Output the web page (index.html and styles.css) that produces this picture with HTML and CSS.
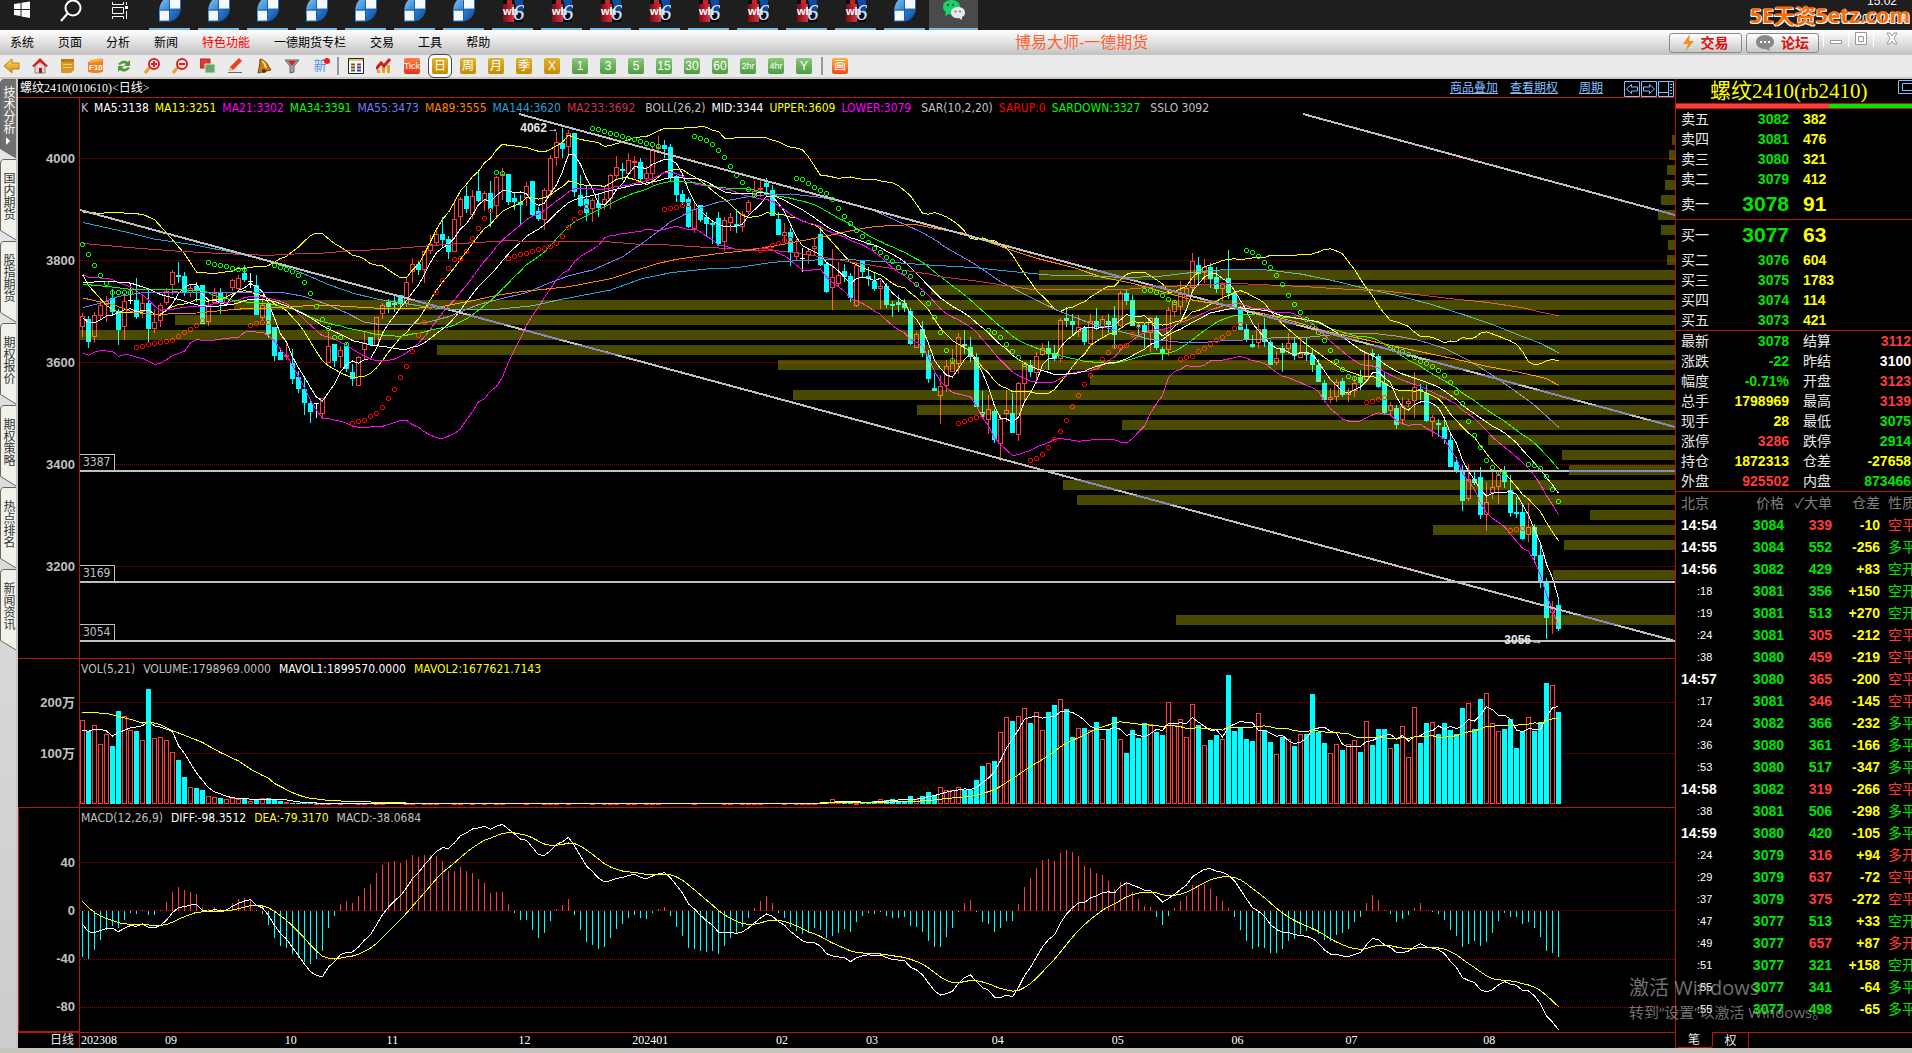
FILE: index.html
```html
<!DOCTYPE html>
<html lang="zh-CN">
<head>
<meta charset="utf-8">
<title>博易大师-一德期货</title>
<link rel="stylesheet" href="styles.css">
</head>
<body>
<svg class="defs" aria-hidden="true">
  <defs>
    <linearGradient id="blue" x1="0" y1="0" x2="1" y2="1"><stop offset="0" stop-color="#8cc4f0"/><stop offset=".5" stop-color="#2f86d2"/><stop offset="1" stop-color="#0a3f96"/></linearGradient>
    <linearGradient id="red" x1="0" y1="0" x2="1" y2="0"><stop offset="0" stop-color="#7c0a14"/><stop offset="1" stop-color="#d8343c"/></linearGradient>
    <linearGradient id="gold" x1="0" y1="0" x2="0" y2="1"><stop offset="0" stop-color="#ffe060"/><stop offset="1" stop-color="#d88a10"/></linearGradient>
    <symbol id="leaf" viewBox="0 0 22 21"><path d="M0 21V10Q1 0 8 -3H22V8Q21 19 11 21Z" fill="url(#blue)"/><path d="M11 -3H21V8H11ZM1 10H10V20H1Z" fill="#f4f8fc"/><path d="M0 9.500H22M10.500 0V21" stroke="#1a5cae" fill="none"/></symbol>
    <symbol id="wh" viewBox="0 0 20 22"><path d="M0 0H20V22H0Z" fill="#050508"/><path d="M11 0H20V16Q13 12 11 0Z" fill="#12489c"/><path d="M0 4H11V22H0Z" fill="url(#red)"/><path d="M4 0H9V4H4Z" fill="#c0242c"/><text x="0" y="15" font-size="11" font-weight="bold" fill="#fff">wh</text><text x="10" y="20" font-size="23" font-style="italic" font-family="Liberation Serif" fill="#cfe4ff">6</text></symbol>
    <symbol id="tab" viewBox="0 0 16 82" preserveAspectRatio="none"><path d="M17 .5H4Q.5 .5 .5 5V71.500L16 81"/></symbol>
  </defs>
</svg>

<header class="taskbar">
  <div class="sys">
    <button aria-label="开始"><svg width="16" height="17" viewBox="0 0 16 17"><path d="M0 3 6.500 2V8H0ZM7.500 1.800 16 .6V8H7.500ZM0 9H6.500V15L0 14ZM7.500 9H16V17L7.500 15.500Z" fill="#fff"/></svg></button>
    <button aria-label="搜索"><svg width="22" height="22" viewBox="0 0 22 22"><circle cx="13" cy="8" r="7.500" fill="none" stroke="#fff" stroke-width="2"/><path d="M8 13 1 21" stroke="#fff" stroke-width="2"/></svg></button>
    <button aria-label="任务视图"><svg width="16" height="18" viewBox="0 0 16 18"><path d="M.5 1V3.500H11.500V1M.5 6.500H11.500V12.500H.5ZM.5 18V15.500H11.500V18M14.500 1V4M14.500 10V18" fill="none" stroke="#fff"/><path d="M13 5H16V8H13Z" fill="#fff"/></svg></button>
  </div>
  <div class="apps">
    <button aria-label="博易大师"><svg><use href="#leaf"/></svg></button>
    <button aria-label="博易大师"><svg><use href="#leaf"/></svg></button>
    <button aria-label="博易大师"><svg><use href="#leaf"/></svg></button>
    <button aria-label="博易大师"><svg><use href="#leaf"/></svg></button>
    <button aria-label="博易大师"><svg><use href="#leaf"/></svg></button>
    <button aria-label="博易大师"><svg><use href="#leaf"/></svg></button>
    <button aria-label="博易大师"><svg><use href="#leaf"/></svg></button>
    <button aria-label="文华财经"><svg><use href="#wh"/></svg></button>
    <button aria-label="文华财经"><svg><use href="#wh"/></svg></button>
    <button aria-label="文华财经"><svg><use href="#wh"/></svg></button>
    <button aria-label="文华财经"><svg><use href="#wh"/></svg></button>
    <button aria-label="文华财经"><svg><use href="#wh"/></svg></button>
    <button aria-label="文华财经"><svg><use href="#wh"/></svg></button>
    <button aria-label="文华财经"><svg><use href="#wh"/></svg></button>
    <button aria-label="文华财经"><svg><use href="#wh"/></svg></button>
    <button aria-label="博易大师"><svg><use href="#leaf"/></svg></button>
    <button class="wechat" aria-label="微信"><svg viewBox="0 0 22 22"><path d="M8 0C3 0 0 3 0 7c0 2 1 4 3 5l-1 4 4-2c6 1 11-2 11-7S13 0 8 0Z" fill="#18d26c"/><circle cx="5" cy="5" r="1.200" fill="#0a5c30"/><circle cx="10" cy="5" r="1.200" fill="#0a5c30"/><path d="M15 7c-4 0-7 2-7 6 0 3 3 6 8 5l3 2v-3c2-1 3-2 3-4 0-4-3-6-7-6Z" fill="#e8e8e8"/><circle cx="12.500" cy="11.500" r="1" fill="#777"/><circle cx="17" cy="11.500" r="1" fill="#777"/></svg></button>
  </div>
  <div class="clock"><span>15:02</span><span>2024/8/16</span></div>
  <strong class="brand">5E天资5etz.com</strong>
</header>

<div class="menubar">
  <nav>
    <button>系统</button><button>页面</button><button>分析</button><button>新闻</button><button class="hot">特色功能</button><button>一德期货专栏</button><button>交易</button><button>工具</button><button>帮助</button>
  </nav>
  <h1>博易大师-一德期货</h1>
  <button class="action"><svg width="11" height="18" viewBox="0 0 11 18"><path d="M7 0 0 10H5L2 18 11 7H6Z" fill="#f09020"/></svg>交易</button>
  <button class="action"><svg width="18" height="16" viewBox="0 0 18 16"><path d="M9 0C4 0 0 3 0 7s4 7 8 7h1l5 2-1-3c3-1 5-3 5-6 0-4-4-7-9-7Z" fill="#888"/><path d="M4 6H6V8H4ZM8 6H10V8H8ZM12 6H14V8H12Z" fill="#fff"/></svg>论坛</button>
  <div class="winctl">
    <button aria-label="最小化"><svg width="12" height="13" viewBox="0 0 12 13"><path d="M.5 8.500H11.500V11.500H.5Z" fill="#fff" stroke="#999"/></svg></button>
    <button aria-label="还原"><svg width="12" height="13" viewBox="0 0 12 13"><path d="M.5 .5H11.500V12.500H.5ZM3.500 4.500H8.500V9.500H3.500Z" fill="#fff" stroke="#999"/></svg></button>
    <button aria-label="关闭"><svg width="12" height="13" viewBox="0 0 12 13"><path d="M1 1H4L6 4 8 1H11L8 6.500 11 12H8L6 9 4 12H1L4 6.500Z" fill="#fff" stroke="#999"/></svg></button>
  </div>
</div>

<div class="toolbar">
  <button aria-label="后退"><svg><path d="M0 8 8 1V5H15V11H8V15Z" fill="url(#gold)" stroke="#c08010"/></svg></button>
  <button aria-label="主页"><svg><path d="M3 8V15H13V8L8 3Z" fill="#e0d8d8" stroke="#888"/><path d="M0 8 8 0 16 8 14 9 8 4 2 9Z" fill="#d42020"/><path d="M7 10H10V15H7Z" fill="#a01818"/></svg></button>
  <button aria-label="便笺"><svg><path d="M1 1H14V12L11 15H1Z" fill="#d89828"/><path d="M1 1H14V4H1Z" fill="#c07a10"/><path d="M3 6.500H12M3 9.500H12" stroke="#f0c878"/></svg></button>
  <button aria-label="F10"><svg><path d="M0 4 15 1V14Q8 16 0 14Z" fill="#f08020"/><path d="M2 2 14 0V3L2 5Z" fill="#f8b040"/><text x="1" y="12" font-size="8" font-weight="bold" fill="#fff">F10</text></svg></button>
  <button aria-label="刷新"><svg><path d="M2 6Q7 0 12 4L14 2V8H8L10 6Q7 4 4 7ZM14 10Q9 16 4 12L2 14V8H8L6 10Q9 12 12 9Z" fill="#4c9c30"/></svg></button>
  <button aria-label="放大"><svg><path d="M6 9 1 15" stroke="#f0a030" stroke-width="3"/><circle cx="10" cy="6" r="5" fill="#fff0f0" stroke="#e02020" stroke-width="2"/><path d="M7 6H13M10 3V9" stroke="#e02020" stroke-width="2"/></svg></button>
  <button aria-label="缩小"><svg><path d="M6 9 1 15" stroke="#f0a030" stroke-width="3"/><circle cx="10" cy="6" r="5" fill="#fff0f0" stroke="#e02020" stroke-width="2"/><path d="M7 6H13" stroke="#e02020" stroke-width="2"/></svg></button>
  <button aria-label="叠加"><svg><path d="M0 1H10V10H0Z" fill="#e03838" stroke="#b02020"/><path d="M5 6H15V15H5Z" fill="#68a868" stroke="#d8e8d8"/></svg></button>
  <button aria-label="画线"><svg><path d="M2 9 11 0 14 3 5 12 1 13Z" fill="#e84020"/><path d="M2 9 5 12 1 13Z" fill="#f0c890"/><path d="M0 14.500H14" stroke="#666"/></svg></button>
  <button aria-label="预警"><svg><path d="M4 1Q10 2 13 9L15 12 2 15 3 10Q4 6 4 1Z" fill="#c87818" stroke="#804808"/><path d="M6 3Q9 5 10 10" stroke="#f8d070" fill="none" stroke-width="2"/><circle cx="8" cy="13" r="2" fill="#503008"/></svg></button>
  <button aria-label="筛选"><svg><path d="M1 2H15L10 8V14L6 15V8Z" fill="#a0a4a8" stroke="#606468"/><path d="M4 3H12L8 8Z" fill="#e02028"/></svg></button>
  <button class="new">新</button>
  <i class="sep"></i>
  <button aria-label="报价"><svg><path d="M.5 .5H15.500V15.500H.5Z" fill="#fff" stroke="#222"/><path d="M1 1H15V3H1Z" fill="#e8c860"/><path d="M3 6.500H7M3 12.500H7" stroke="#208030" stroke-width="2"/><path d="M9 6.500H13M3 9.500H7" stroke="#d02020" stroke-width="2"/><path d="M9 9.500H13M9 12.500H13" stroke="#2040c0" stroke-width="2"/></svg></button>
  <button aria-label="走势"><svg><path d="M1 12H4V15H1ZM6 9H9V15H6ZM11 7H14V15H11Z" fill="#e8a020"/><path d="M0 11 5 5 8 8 14 1" stroke="#e01818" stroke-width="3" fill="none"/></svg></button>
  <button class="p tick">Tick</button>
  <button class="p gold on">日</button>
  <button class="p gold">周</button>
  <button class="p gold">月</button>
  <button class="p gold">季</button>
  <button class="p gold">X</button>
  <button class="p green">1</button>
  <button class="p green">3</button>
  <button class="p green">5</button>
  <button class="p green">15</button>
  <button class="p green">30</button>
  <button class="p green">60</button>
  <button class="p green small">2hr</button>
  <button class="p green small">4hr</button>
  <button class="p green">Y</button>
  <i class="sep"></i>
  <button class="p draw">画</button>
</div>

<main>
  <aside>
    <button class="on"><svg><use href="#tab"/></svg><span>技术分析</span><i></i></button>
    <button><svg><use href="#tab"/></svg><span>国内期货</span></button>
    <button><svg><use href="#tab"/></svg><span>股指期货</span></button>
    <button><svg><use href="#tab"/></svg><span>期权报价</span></button>
    <button><svg><use href="#tab"/></svg><span>期权策略</span></button>
    <button><svg><use href="#tab"/></svg><span>热点排名</span></button>
    <button><svg><use href="#tab"/></svg><span>新闻资讯</span></button>
  </aside>

  <section class="charts">
    <div class="charthead">
      <h2>螺纹2410(010610)&lt;日线&gt;</h2>
      <a href="#">商品叠加</a><a href="#">查看期权</a><a href="#" class="cycle">周期</a>
      <div class="nav">
        <button aria-label="前一个"><svg viewBox="0 0 16 17"><path d="M.5 1.500H15.500V16.500H.5ZM2.500 9 7.500 4.500V7H13.500V11H7.500V13.500Z"/></svg></button><button aria-label="后一个"><svg viewBox="0 0 16 17"><path d="M.5 1.500H15.500V16.500H.5ZM13.500 9 8.500 4.500V7H2.500V11H8.500V13.500Z"/></svg></button><button aria-label="布局"><svg viewBox="0 0 16 17"><path d="M.5 1.500H15.500V16.500H.5ZM10.500 2V16M1 12.500H10M12 4.500H14M12 7.500H14M12 10.500H14M12 13.500H14"/></svg></button>
      </div>
    </div>

    <div class="pane price">
      <div class="gutter"><span>4000</span><span>3800</span><span>3600</span><span>3400</span><span>3200</span></div>
      <div class="plot">
        <svg id="price" viewBox="0 0 1595 560" preserveAspectRatio="none"></svg>
        <p class="legend">
          <span class="k">K</span><span class="w">MA5:3138</span><span class="y">MA13:3251</span><span class="m">MA21:3302</span><span class="g">MA34:3391</span><span class="v">MA55:3473</span><span class="o">MA89:3555</span><span class="b">MA144:3620</span><span class="c last">MA233:3692</span>
          <span class="k">BOLL(26,2)</span><span class="w">MID:3344</span><span class="y">UPPER:3609</span><span class="m last">LOWER:3079</span>
          <span class="k">SAR(10,2,20)</span><span class="r">SARUP:0</span><span class="g last">SARDOWN:3327</span>
          <span class="k">SSLO 3092</span>
        </p>
        <span class="level l1">3387</span><span class="level l2">3169</span><span class="level l3">3054</span>
        <span class="mark high">4062→</span><span class="mark low">3056→</span>
      </div>
    </div>

    <div class="pane volume">
      <div class="gutter"><span>200万</span><span>100万</span></div>
      <div class="plot">
        <svg id="volume" viewBox="0 0 1595 148" preserveAspectRatio="none"></svg>
        <p class="legend"><span class="k">VOL(5,21)</span><span class="k">VOLUME:1798969.0000</span><span class="w">MAVOL1:1899570.0000</span><span class="y">MAVOL2:1677621.7143</span></p>
      </div>
    </div>

    <div class="pane macd">
      <div class="gutter"><span>40</span><span>0</span><span>-40</span><span>-80</span></div>
      <div class="plot">
        <svg id="macd" viewBox="0 0 1595 224" preserveAspectRatio="none"></svg>
        <p class="legend"><span class="k">MACD(12,26,9)</span><span class="w">DIFF:-98.3512</span><span class="y">DEA:-79.3170</span><span class="k">MACD:-38.0684</span></p>
      </div>
    </div>

    <div class="pane axis">
      <div class="gutter">日线</div>
      <div class="months" id="months"></div>
    </div>
  </section>

  <section class="quote">
    <h2>螺纹2410(rb2410)<svg viewBox="0 0 16 17"><path d="M.5 1.500H17V14.500H.5ZM4.500 4.500H17V11.500H4.500Z"/></svg></h2>
    <div class="ratio"><i></i></div>
    <table class="depth">
      <tbody>
        <tr><th>卖五</th><td>3082</td><td>382</td></tr>
        <tr><th>卖四</th><td>3081</td><td>476</td></tr>
        <tr><th>卖三</th><td>3080</td><td>321</td></tr>
        <tr><th>卖二</th><td>3079</td><td>412</td></tr>
        <tr class="best"><th>卖一</th><td>3078</td><td>91</td></tr>
      </tbody>
    </table>
    <table class="depth">
      <tbody>
        <tr class="best"><th>买一</th><td>3077</td><td>63</td></tr>
        <tr><th>买二</th><td>3076</td><td>604</td></tr>
        <tr><th>买三</th><td>3075</td><td>1783</td></tr>
        <tr><th>买四</th><td>3074</td><td>114</td></tr>
        <tr><th>买五</th><td>3073</td><td>421</td></tr>
      </tbody>
    </table>
    <table class="stats">
      <tbody>
        <tr><th>最新</th><td class="g">3078</td><th>结算</th><td class="r">3112</td></tr>
        <tr><th>涨跌</th><td class="g">-22</td><th>昨结</th><td class="w">3100</td></tr>
        <tr><th>幅度</th><td class="g">-0.71%</td><th>开盘</th><td class="r">3123</td></tr>
        <tr><th>总手</th><td class="y">1798969</td><th>最高</th><td class="r">3139</td></tr>
        <tr><th>现手</th><td class="y">28</td><th>最低</th><td class="g">3075</td></tr>
        <tr><th>涨停</th><td class="r">3286</td><th>跌停</th><td class="g">2914</td></tr>
        <tr><th>持仓</th><td class="y">1872313</td><th>仓差</th><td class="y">-27658</td></tr>
        <tr><th>外盘</th><td class="r">925502</td><th>内盘</th><td class="g">873466</td></tr>
      </tbody>
    </table>
    <table class="ticks">
      <thead><tr><th>北京</th><th>价格</th><th>✓大单</th><th>仓差</th><th>性质</th></tr></thead>
      <tbody id="ticks"></tbody>
    </table>
    <div class="tabs"><button class="on">笔</button><button>权</button></div>
  </section>
</main>
<div class="watermark"><strong>激活 Windows</strong><span>转到“设置”以激活 Windows。</span></div>
<script src="chart.js"></script>
</body>
</html>
```
FILE: styles.css
```css
* { box-sizing: border-box; }
body {
  margin: 0;
  background: #c8c4c0;
  color: #e8e8e8;
  font: 12px/16px "Liberation Sans", "Noto Sans CJK SC", sans-serif;
  overflow: hidden;
}
button { border: 0; padding: 0; margin: 0; background: none; color: inherit; font: inherit; display: flex; align-items: center; justify-content: center; white-space: nowrap; }
h1, h2, p { margin: 0; font-weight: normal; }
table { border-collapse: collapse; table-layout: fixed; width: 100%; }
th, td { padding: 0; white-space: nowrap; }
.defs { position: absolute; width: 0; height: 0; }

.w { color: #fff; } .y { color: #ff0; } .m { color: #f0f; } .v { color: #7878f0; }
.o { color: #ff8000; } .b { color: #28a0d8; } .c { color: #d03050; } .k { color: #c0c0c0; }
.g { color: #00e600; } .r { color: #ff3c3c; }

/* taskbar */
.taskbar { position: relative; display: flex; height: 30px; background: #1e1e1e; overflow: hidden; }
.sys { display: flex; align-items: flex-start; width: 145px; padding-left: 14px; gap: 30px; }
.sys button { height: 22px; align-items: flex-start; }
.sys button:nth-child(1), .sys button:nth-child(3) { padding-top: 1px; }
.apps { display: flex; }
.apps button { width: 49px; height: 30px; padding-bottom: 6px; align-items: flex-start; background: linear-gradient(#76b9ed, #76b9ed) 4px 28px / 41px 2px no-repeat; }
.apps svg { width: 22px; height: 22px; }
.apps .wechat { background: linear-gradient(#76b9ed, #76b9ed) 0 28px / 49px 2px no-repeat, #4a4a4a; }
.clock { margin-left: auto; display: flex; flex-direction: column; align-items: center; font-size: 12px; line-height: 16px; color: #fff; margin-top: -7px; width: 60px; white-space: nowrap; }
.clock span:last-child { margin-top: 2px; }
.brand { position: absolute; right: 2px; top: 3px; font: bold 21px/24px "Open Sans", "Noto Sans CJK SC", sans-serif; color: #ff6a00; text-shadow: 1px 1px #fff, -1px 1px #fff; }

/* menu */
.menubar { display: flex; align-items: center; height: 25px; background: linear-gradient(#ffffff, #e4e4e4 45%, #c2c2c2); color: #000; }
.menubar nav { display: flex; gap: 24px; padding-left: 10px; }
.hot { color: #f00; }
.menubar h1 { flex: 1; text-align: center; padding-left: 4px; font-size: 16px; line-height: 24px; color: #ff6030; }
.action { width: 73px; height: 20px; margin-right: 4px; gap: 7px; border: 1px solid #888; border-radius: 3px; background: linear-gradient(#fff, #c8c8c8); color: #d81414; font-size: 14px; font-weight: bold; }
.winctl { display: flex; width: 89px; align-self: stretch; }
.winctl button { width: 25px; height: 17px; border-left: 1px solid #fff; }
.winctl button:last-child { width: 37px; }

/* toolbar */
.toolbar { display: flex; align-items: center; gap: 12px; height: 24px; padding: 0 4px; background: #ebebeb; border-bottom: 2px solid #cbc7c3; }
.toolbar button { width: 16px; height: 16px; flex: none; }
.toolbar svg { width: 16px; height: 16px; }
.toolbar .new { position: relative; color: #4a90e8; font-size: 13px; }
.new::after { content: ""; position: absolute; right: -2px; top: 0; width: 6px; height: 6px; border-radius: 3px; background: #f01818; }
.sep { width: 2px; height: 18px; margin: 0 -3px; background: #999; }
.toolbar .p { border-radius: 2px; color: #fff; font-size: 12px; line-height: 16px; }
.toolbar .small { font-size: 9px; }
.toolbar .tick { background: linear-gradient(#ff8040, #e83018); font-size: 9px; }
.gold { background: linear-gradient(#e0b030, #c48c00); }
.green { background: linear-gradient(#8cc878, #4c9c40); }
.draw { background: linear-gradient(#ffb040, #f04818); }
.toolbar .on { outline: 1px solid #444; outline-offset: 3px; box-shadow: 0 0 0 3px #fff; }

/* side tabs */
main { display: flex; background: #000; }
aside { width: 18px; flex: none; background: linear-gradient(#e8e8e8, #cccccc); border-right: 2px solid #c8c4c4; }
aside button { position: relative; width: 16px; height: 82px; flex-direction: column; justify-content: flex-start; padding-top: 13px; color: #333; }
aside button.on { height: 80px; padding-top: 7px; color: #fff; }
aside svg { position: absolute; inset: 0; width: 16px; height: 100%; fill: #f2f2ea; stroke: #666; }
aside .on svg { fill: #707070; }
aside span { position: relative; writing-mode: vertical-rl; font-size: 12px; line-height: 16px; }
aside i { position: relative; margin-top: 3px; border: 4px solid transparent; border-left-color: #fff; border-right: 0; }

/* charts */
.charts { flex: 1; min-width: 0; border-right: 1px solid #b81408; }
.charthead { display: flex; align-items: center; height: 18px; padding-left: 2px; font-size: 12px; }
.charthead h2 { flex: 1; font: 12px/18px "Liberation Serif", "Noto Sans CJK SC", serif; color: #fff; }
.charthead a { color: #80c0ff; margin-right: 12px; line-height: 15px; }
.charthead .cycle { margin: 0 21px 0 9px; }
.nav { display: flex; gap: 1px; padding-right: 1px; }
.nav svg { width: 16px; height: 17px; fill: none; stroke: #80c0ff; }
.pane { display: flex; border-top: 1px solid #b81408; }
.gutter { flex: none; width: 62px; border-right: 1px solid #b81408; padding-right: 4px; text-align: right; color: #c0c0c0; font-size: 13px; font-weight: bold; }
.gutter span { display: block; }
.price .gutter { padding-top: 10px; line-height: 102px; height: 560px; }
.volume .gutter { padding-top: 18px; line-height: 51px; height: 148px; }
.macd .gutter { padding-top: 31px; line-height: 48px; border: 1px solid #b81408; border-width: 0 1px 1px; height: 224px; }
.plot { position: relative; flex: 1; min-width: 0; }
.plot svg { display: block; width: 100%; }
.price svg { height: 560px; }
.volume svg { height: 148px; }
.macd svg { height: 224px; }
.legend { position: absolute; left: 1px; top: 2px; display: flex; gap: 8px; font: 12px/16px "DejaVu Sans Condensed", sans-serif; white-space: nowrap; }
.price .legend { gap: 6px; }
.legend .last { margin-right: 4px; }
.legend .g { color: #0f0; }
.legend .r { color: #f00; }
.level { position: absolute; left: 0; width: 35px; height: 17px; border: 1px solid #c0c0c0; border-left: 0; padding-left: 3px; background: #000; color: #c0c0c0; font: 12px/15px "DejaVu Sans Condensed", sans-serif; }
.l1 { top: 356px; } .l2 { top: 467px; } .l3 { top: 526px; }
.mark { position: absolute; font-weight: bold; color: #e8e8e8; }
.high { left: 27.600%; top: 22px; }
.low { left: 89.300%; top: 534px; }
.axis { height: 16px; }
.axis .gutter { line-height: 15px; font-size: 12px; font-weight: normal; color: #e8e8e8; padding-right: 5px; }
.months { display: flex; flex: 1; font: 12px/15px "Liberation Serif", serif; color: #fff; padding-left: 1px; }

/* quotes */
.quote { width: 236px; flex: none; overflow: hidden; display: flex; flex-direction: column; font-size: 14px; }
.quote h2 { position: relative; height: 24px; padding-left: 34px; font: 21px/24px "Liberation Serif", "Noto Sans CJK SC", serif; color: #ff0; }
.quote h2 svg { position: absolute; right: -2px; top: 0; width: 16px; height: 17px; fill: none; stroke: #80c0ff; stroke-width: 1; }
.ratio { height: 6px; background: #00e600; border: 1px solid #b81408; border-width: 1px 0; }
.ratio i { display: block; width: 65%; height: 4px; background: #ff3c3c; }
.quote th { font-weight: normal; text-align: left; color: #e8e8e8; }
.quote td { font-weight: bold; text-align: right; }
.depth, .stats { border-bottom: 1px solid #b81408; line-height: 20px; }
.depth tr, .stats tr { height: 20px; }
.depth th, .stats th:first-child { width: 42px; padding-left: 5px; }
.depth td:nth-child(2) { width: 71px; color: #00e600; }
.depth td:nth-child(3) { padding-left: 14px; text-align: left; color: #ff0; }
.depth .best { height: 30px; }
.depth .best td { font-size: 21px; }
.stats td:nth-child(2) { width: 71px; }
.stats th:nth-child(3) { width: 55px; padding-left: 14px; }
.stats td:nth-child(4) { padding-right: 1px; }
.ticks tr { height: 22px; }
.ticks thead th { color: #808080; text-align: right; }
.ticks thead th:first-child { width: 42px; padding-left: 5px; text-align: left; }
.ticks thead th:nth-child(2) { width: 66px; }
.ticks thead th:nth-child(3), .ticks thead th:nth-child(4) { width: 48px; }
.ticks th:last-child, .ticks td:last-child { text-align: left; padding-left: 8px; font-weight: normal; }
.ticks td:first-child { text-align: left; padding-left: 5px; color: #fff; }
.ticks td.sec { padding-left: 21px; font-size: 11px; font-weight: normal; }
.tabs { display: flex; height: 16px; margin-top: auto; border-top: 1px solid #b81408; font-size: 12px; }
.tabs button { width: 36px; height: 15px; border-right: 1px solid #b81408; }
.tabs .on { width: 37px; margin-top: -1px; background: #000; border-bottom: 1px solid #b81408; border-radius: 0 0 3px 3px; height: 16px; }

.watermark { position: absolute; right: 88px; top: 975px; width: 195px; color: rgba(190, 190, 190, .6); font-family: "Open Sans", "Noto Sans CJK SC", sans-serif; white-space: nowrap; pointer-events: none; }
.watermark strong { display: block; font-weight: normal; font-size: 20px; line-height: 26px; }
.watermark span { display: block; font-size: 15px; line-height: 22px; }
```
FILE: chart.js
```js
// Daily bars: colour (r up, c down, w flat) then high, open/close top, open/close bottom, low.
// The history comes in three blocks, each with its own pixel scale.
const blocks = [
  { y: v => v / 2.7034 - 18, x: v => v / 3 - 80, bars: `r630,638,669,695 c639,647,707,725 r627,634,696,711 r601,609,639,645 r585,597,609,654 c566,589,627,637 c620,625,676,716 r575,597,667,703 w548,596,597,606 c534,596,642,645 r580,604,626,643 c565,604,672,710 r620,655,672,684 r604,609,651,668 r562,570,604,608 r514,520,553,580 c492,528,532,549 c520,530,576,584 r554,561,577,587 c546,558,569,600 c554,554,659,660 r594,609,653,665 r562,575,603,606 c562,574,604,632 r575,590,604,606 r537,542,561,570 r527,534,565,576 c500,521,541,545 w522,543,545,562 c528,554,635,635 r590,608,644,650 c603,603,686,697 c668,668,745,760 c726,735,756,757 r706,744,748,757 c728,765,807,822 c788,804,834,846 c800,834,872,906 c866,872,897,927 w874,874,876,915 r860,860,902,916 r681,719,764,766 c714,714,761,775 r719,731,748,778 c710,719,781,790 c768,789,808,827 r745,750,826,827 r680,711,729,757 c695,695,717,718 r640,642,718,720 r603,609,633,647 c593,599,614,631 c585,604,609,627 c580,581,605,620 r534,547,606,615 r481,497,518,549 c489,497,514,527 r461,461,513,549 r420,444,461,470 r405,417,440,450 c370,416,432,453 c422,431,464,483 r325,377,464,465 r317,323,371,395 c287,314,348,360 r297,314,364,376 c249,300,327,330` },
  { y: v => v / 3 - 18, x: v => v / 3 + 400, bars: `r334,338,363,392 c302,339,388,440 r287,292,377,418 r265,283,288,360 c282,282,366,376 c340,354,367,390 c345,366,374,432 r305,319,354,378 c303,303,405,412 c380,393,416,422 r325,331,421,449 r225,235,334,350 r155,187,235,258 c145,190,207,233 r150,160,200,232 c160,160,335,350 c285,345,378,382 c318,357,399,424 r355,361,388,426 c340,370,384,411 r318,358,376,390 r282,286,358,386 r229,262,287,299 c249,267,271,299 r220,241,281,285 r228,243,250,293 c235,246,297,308 r258,280,297,310 r198,208,281,315 r168,200,204,213 c180,196,207,235 c193,202,293,305 c285,289,345,365 c330,342,366,374 c352,357,441,444 r370,386,451,458 c374,374,420,426 c395,411,431,472 c420,430,434,491 c396,414,491,495 r410,419,485,513 r400,412,430,453 c386,432,436,459 r392,402,440,456 r360,367,397,402 r304,332,345,350 r300,325,331,352 c294,310,321,350 c315,331,407,408 c397,418,464,465 r430,457,467,485 c445,457,515,558 r478,517,532,540 w503,533,535,576 r508,514,526,552 r474,497,507,525 c438,462,554,558 c550,552,635,638 r507,590,625,690 r547,586,611,622 c552,573,590,605 c580,588,653,667 r545,556,679,681 c543,543,577,592 c562,588,596,617 c575,603,626,633 r600,619,628,687 c608,619,675,684 c664,671,677,711 c645,667,674,696 c657,670,683,695 c685,693,791,795 r755,763,803,804 c723,747,818,831 c810,826,896,908 c880,924,933,934 r885,919,947,1031 r840,858,919,936 r808,850,875,876 r760,772,853,882` },
  { y: v => v / 3 + 122, x: v => v / 2.119 + 860, bars: `c330,372,377,401 c351,381,410,427 c398,412,560,562 c514,576,590,597 r524,568,600,641 c568,574,660,668 r585,597,673,722 r510,570,583,606 c520,580,639,640 r486,490,644,664 r427,433,492,549 c419,436,455,470 r395,409,458,491 r370,384,406,408 c362,384,402,449 c374,400,416,424 r295,300,418,426 c262,294,303,320 c283,304,314,348 r284,322,335,350 c318,323,365,375 r283,304,373,375 c264,303,320,329 r288,297,320,352 c283,304,315,340 c258,293,344,385 r214,219,319,321 c211,219,242,255 c224,240,317,319 c309,314,321,351 c309,316,337,385 r290,294,340,397 c289,294,383,390 c382,387,401,419 r262,271,391,408 r243,247,275,290 r183,223,261,285 r195,205,230,245 r99,122,205,215 c110,136,162,188 r118,140,158,190 c130,141,178,205 c140,171,206,218 r187,193,206,243 c90,174,218,236 c212,220,262,270 c258,262,330,331 c313,328,359,365 c345,373,380,384 r310,327,370,385 c294,328,365,380 c360,366,434,435 r394,414,430,434 c368,384,398,456 r340,368,388,402 c350,369,409,420 r353,399,414,415 c352,400,405,424 c384,404,434,455 c416,436,486,487 c480,489,539,543 r505,532,541,549 r476,486,532,545 c474,483,526,530 r505,516,526,546 r470,488,514,531 c450,472,488,510 r399,400,481,487 c388,400,402,421 c402,408,500,505 c460,490,578,585 r547,556,574,588 c555,564,614,627 r530,559,601,613 r538,543,551,560 r457,502,543,594 c492,507,514,540 c496,520,602,607 r585,592,607,650 c596,608,613,651 c598,621,656,671 c644,660,740,741 c712,725,750,760 c735,750,842,873 r732,776,838,842 c757,777,790,796 c742,771,885,896 r786,846,884,933 r757,802,818,836 r755,766,802,852 c738,752,785,804 c765,810,879,892 c831,877,881,895 c850,876,956,960 r850,922,946,965 c912,921,1007,1030 c968,1006,1083,1104 c1075,1085,1194,1258 r1143,1163,1180,1243 c1130,1155,1227,1233` }
];
const X = i => 2.5 + 6 * i;
const bars = blocks.flatMap(b => b.bars.split(' ').map(s => {
  const [high, top, bottom, low] = s.slice(1).split(',').map(v => Math.round(b.y(+v)));
  return { kind: s[0], high, top, bottom, low };
}));
const price = y => 4000 - (y - 60.6) / 0.51;
const toY = p => 60.6 + (4000 - p) * 0.51;
const closes = bars.map(b => price(b.kind === 'c' ? b.bottom : b.top));

const rect = (x, y, w, h, attrs) => `<rect x="${x}" y="${y}" width="${w}" height="${h}" ${attrs}/>`;
const seg = (x1, y1, x2, y2, colour, extra = '') => `<path d="M${x1} ${y1}L${x2} ${y2}" stroke="${colour}" fill="none" ${extra}/>`;
const poly = (pts, colour) => `<polyline points="${pts.map(p => p.map(v => v.toFixed(1)).join()).join(' ')}" fill="none" stroke="${colour}" shape-rendering="crispEdges"/>`;
const grid = ys => ys.map(y => seg(0, y + .5, 1595, y + .5, '#a00000', 'stroke-dasharray="1 1"')).join('');
const pairs = s => s.trim().split(' ').map(p => p.split(',').map(Number));
const place = (b, s) => s ? pairs(s).map(([x, y]) => [blocks[b].x(x), blocks[b].y(y)]) : [];
const mean = a => a.reduce((s, v) => s + v, 0) / a.length;
const rolling = (src, n, f) => src.map((_, i) => i < n - 1 ? null : f(src.slice(i - n + 1, i + 1)));
const computed = (n, f) => rolling(closes, n, f).map((p, i) => p === null ? null : [X(i), toY(p)]).filter(Boolean);
const sd = a => { const m = mean(a); return Math.sqrt(mean(a.map(v => (v - m) ** 2))); };

function candle(b, i) {
  const x = 6 * i, c = X(i);
  if (b.kind === 'c') return seg(c, b.high, c, b.low, '#0ff') + rect(x, b.top, 5, Math.max(2, b.bottom - b.top), 'fill="#0ff"');
  if (b.kind === 'w') return seg(c, b.high, c, b.low, '#fff') + seg(x, b.top + .5, x + 5, b.top + .5, '#fff');
  return seg(c, b.high, c, b.top, '#ff3c3c') + seg(c, b.bottom, c, b.low, '#ff3c3c') +
    rect(x + .5, b.top + .5, 4, Math.max(1, b.bottom - b.top - 1), 'fill="#000" stroke="#ff3c3c"');
}

const averages = [
  ['#fff', place(0, '248,643 266,656 284,656 302,648'), computed(5, mean)],
  ['#ff0', place(0, '248,527 266,556 284,574 302,592 320,610 338,620 356,628 428,630'), computed(13, mean)],
  ['#f0f', place(0, '248,525 266,534 320,536 338,540 356,548 392,560 428,581 446,595 464,612 482,622 518,620 554,614'), computed(21, mean)],
  ['#0f0', place(0, '248,552 320,558 392,566 464,566 518,565 572,570 608,568 644,583 698,595 752,602 806,604'), computed(34, mean)],
  ['#fff', place(0, '248,548 320,544 392,549 446,565 482,580 536,593 590,608 640,613'), computed(26, mean)],
  ['#ff0', place(0, '248,358 300,360 346,358 428,363 464,378 500,414 554,470 590,520 644,523'), computed(26, a => mean(a) + 2 * sd(a))],
  ['#f0f', place(0, '248,739 266,744 284,736 302,731 338,734 356,747 374,742 392,744 410,750 428,753 464,769 482,766 518,745 554,733 572,710 590,702 626,705'), computed(26, a => mean(a) - 2 * sd(a))]
];
const slow = [
  ['#7878f0', '248,615 302,603 356,585 428,575 518,573 842,574 914,585 986,608 1040,630 1094,655 1148,662 1220,662 1280,655 1346,640 1436,607', '68,655 140,638 200,612 266,587 338,570 428,530 500,480 572,425 640,390 716,366 806,350 860,344 932,342 1022,352 1112,370 1166,385 1238,417 1328,458 1382,490', '0,72 77,135 128,185 192,232 250,272 319,310 383,335 446,358 510,367 560,367 611,361 675,359 713,352 770,353 827,345 878,340 916,340 967,348 1018,362 1069,385 1120,421 1170,465 1221,515 1260,556 1311,622'],
  ['#ff8000', '248,589 300,600 338,607 400,628 460,634 520,632 590,630 680,622 752,617 842,616 950,608 1020,611 1130,617 1230,618 1330,612 1436,593', '50,646 122,635 266,620 392,596 464,572 536,550 590,538 698,523 806,511 878,499 950,485 1040,468 1094,456 1166,442 1238,436 1310,434 1375,447', '0,28 52,40 103,66 154,92 205,115 281,142 344,172 408,190 471,215 535,240 586,252 637,268 688,282 764,310 815,333 878,352 942,372 1018,395 1094,418 1158,439 1221,455 1260,467 1285,476 1311,496'],
  ['#28a0d8', '248,385 392,414 464,430 590,447 698,466 806,488 914,525 986,553 1058,576 1130,592 1220,605 1300,616 1380,621 1436,621', '50,688 158,677 230,661 266,654 392,630 482,597 572,578 680,567 770,563 878,547 968,541 1094,538 1220,546 1346,555', '0,137 77,143 141,153 230,165 294,166 395,173 471,168 548,155 611,148 688,149 764,162 827,180 904,206 980,230 1043,254 1107,283 1170,313 1221,342 1272,370 1311,398'],
  ['#d03050', '248,442 390,453 520,462 640,468 740,472 806,474 914,469 968,468 1060,461 1130,459 1220,453 1346,444 1436,439', '86,482 176,485 392,486 464,492 554,494 644,500 716,504 806,510 878,511 950,519 1040,533 1130,549 1240,566 1346,582', '0,170 77,183 141,197 192,208 395,208 459,200 523,197 586,192 637,191 700,195 777,200 840,206 942,213 1018,225 1082,236 1158,247 1234,263 1272,276 1311,287']
];

// Parabolic stops: first bar index, block, colour, values
const sar = [
  [0, 0, 'g', '444 471 501 528 549 572 572 572 574'], [9, 0, 'r', '722 720 715 712 707 706 702 693 682 672 661 650'],
  [21, 0, 'g', '493 498 501 504 507 510 511'], [28, 0, 'r', '663 658 655 653'],
  [32, 0, 'g', '501 506 512 517 528 547 576 612 645 671 695 695 715'],
  [45, 0, 'r', '926 923 918 909 901 885 860 834 803 774 733 690 653 612 574 542 507 483 482 463 428 399'],
  [67, 1, 'r', '415 391'], [69, 1, 'g', '277 279'], [71, 1, 'r', '535 529 523 519 514 508 505 499 488 469 442 418 397 379'],
  [85, 1, 'g', '143 148 154 160 163 169 175 178 184 190 193 199'], [97, 1, 'r', '388 385 382 376 373'],
  [102, 1, 'g', '169 175 181 193 211 232 259 286 307 328 345'], [113, 1, 'r', '511 505 496 490 481 478'],
  [119, 1, 'g', '295 298 310 321 331 340 358 385 409 430 451 469 487 505 517 532 544 562 577 589 613 640 670 712 757 811 841'],
  [146, 2, 'r', '610 604 598 592 586'], [151, 2, 'g', '331 337 352 373 394 412 433'],
  [158, 2, 'r', '721 715 703 682 658 634 601 559 526 493 466 442 418 397 379 377 376 343 319'],
  [177, 2, 'g', '209 211 217 226 238 247'], [183, 2, 'r', '418 412 409 394 385 373 361 352 340 325 313'],
  [194, 2, 'g', '91 97 109 127 142 166 193 226 253 277 298 317 337 361 391 424 448 469 475 481'],
  [214, 2, 'r', '547 544 538 532'], [218, 2, 'g', '382 388 394 403 412 424 430 439 451 466 487 517 550 604 646 682 721 742 757 758'],
  [238, 2, 'r', '931 928 925'], [241, 2, 'g', '733 736 745 769 808 844']
];
const stops = sar.map(([from, b, c, list]) => list.split(' ').map((v, k) =>
  `<circle cx="${X(from + k)}" cy="${Math.round(blocks[b].y(+v)) + .5}" r="2" fill="none" stroke="${c === 'g' ? '#0f0' : '#f00'}" shape-rendering="crispEdges"/>`).join('')).join('');

// Volume by price: left edge of each bar, growing from the right axis
const profile = pairs('37,1592 52,1589 67,1587 82,1585 97,1581 112,1578 127,1581 142,1588 157,1587 172,959 187,851 202,154 217,95 232,0 247,357 262,698 277,1010 292,713 307,837 322,1042 337,1408 352,1482 367,1489 382,983 397,997 412,1510 427,1353 442,1484 472,1473 517,1096');
const shelf = profile.map(([y, x]) => rect(x, y, 1595 - x, 10, '')).join('');
const trends = [[439, 16, 1595, 329], [0, 112, 1595, 543], [1223, 16, 1595, 117], [0, 373, 1595, 373], [0, 484, 1595, 484], [0, 543, 1595, 543]];
const rays = colour => trends.map(t => seg(...t, colour, 'stroke-width="2"')).join('');

document.getElementById('price').innerHTML =
  `<defs><clipPath id="shelf">${shelf}</clipPath></defs><g shape-rendering="crispEdges">` +
  grid([60, 162, 264, 366, 468]) + bars.map(candle).join('') + '</g>' +
  averages.map(([c, warm, run]) => poly([...warm, ...run], c)).join('') +
  slow.map(([c, ...parts]) => poly(parts.flatMap((s, b) => place(b, s)), c)).join('') + stops +
  `<g fill="#fffa00" fill-opacity=".29" shape-rendering="crispEdges">${shelf}</g>` +
  `<g shape-rendering="crispEdges">${rays('#c0c0c0')}<g clip-path="url(#shelf)">${rays('#8888c0')}</g></g>`;

// Turnover, as the top edge of each column
const tops = [
  ...'241 272 256 313 283 318 213 229 271 273 301 147 295 292 301 337 360 411 442 444 450 469 472 474 478 474 477 475 484 478 475 474 480 484 486'.split(' '),
  ...Array(89).fill(489),
  ...'486 478 487 487 483 488 488 488 483 478 479 478 482 482 468 477 468 456 465 442 450 450 442 449 451 420 378 370 363 277 232 243 229 205 249 217 271 216 195 178 207 291 265 264 270 246 298 266 231 298 339 270 294 249 252 276 285 187 255 238 292 193 255 316 300 285 298 105 273 262 297 303 220 271 306 343 291 298 318 283 282 162 275 309 340 313 330 313 301 336 244 315 267 267 325 312 259 352 202 310 249 247 282 249 270 283 204 190 268 177 160 250 274 267 237 324 272 232 273 245 129 136 216'.split(' ')
].map(v => v / 3 - 19);
const volLine = (n, warm, colour) => poly([...pairs(warm).map(([i, v]) => [X(i), v / 3 - 19]),
  ...rolling(tops, n, mean).map((v, i) => v === null ? null : [X(i), v]).filter(Boolean)], colour);
document.getElementById('volume').innerHTML = '<g shape-rendering="crispEdges">' + grid([43, 94]) +
  tops.map((y, i) => {
    const t = Math.round(y);
    return bars[i].kind === 'c' ? rect(6 * i, t, 5, 145 - t, 'fill="#0ff"')
      : rect(6 * i + .5, t + .5, 4, Math.max(1, 144 - t), 'fill="#000" stroke="#ff3c3c"');
  }).join('') + '</g>' +
  volLine(5, '0,271 1,274 2,268 3,268', '#fff') + volLine(21, '0,217 4,220 6,229 8,238 10,249 11,245 13,254 15,272 17,286 19,300', '#ff0');

// MACD(12,26,9)
let fast = 3728.5, slowEma = 3740, dea = 7.5;
const macd = closes.map((c, i) => {
  if (i) {
    fast += (c - fast) * 2 / 13;
    slowEma += (c - slowEma) * 2 / 27;
    dea += (fast - slowEma - dea) * 2 / 10;
  }
  return { diff: fast - slowEma, dea };
});
const M = v => 102.5 - v * 1.213;
document.getElementById('macd').innerHTML = '<g shape-rendering="crispEdges">' + grid([54, 102, 151, 199]) +
  macd.map((m, i) => seg(X(i), 102.5, X(i), M(2 * (m.diff - m.dea)), m.diff > m.dea ? '#ff3c3c' : '#0ff')).join('') + '</g>' +
  poly(macd.map((m, i) => [X(i), M(m.diff)]), '#fff') + poly(macd.map((m, i) => [X(i), M(m.dea)]), '#ff0');

document.getElementById('months').innerHTML =
  [['202308', 14], ['09', 20], ['10', 17], ['11', 22], ['12', 19], ['202401', 24], ['02', 15], ['03', 21], ['04', 20], ['05', 20], ['06', 19], ['07', 23], ['08', 32]]
    .map(([t, n]) => `<span style="flex:${n} 0 0">${t}</span>`).join('');

const ticks = `14:54 3084 r339 -10 空平|14:55 3084 g552 -256 多平|14:56 3082 g429 +83 空开|:18 3081 g356 +150 空开|:19 3081 g513 +270 空开|:24 3081 r305 -212 空平|:38 3080 r459 -219 空平|14:57 3080 r365 -200 空平|:17 3081 r346 -145 空平|:24 3082 g366 -232 多平|:36 3080 g361 -166 多平|:53 3080 g517 -347 多平|14:58 3082 r319 -266 空平|:38 3081 g506 -298 多平|14:59 3080 g420 -105 多平|:24 3079 r316 +94 多开|:29 3079 r637 -72 空平|:37 3079 r375 -272 空平|:47 3077 g513 +33 空开|:49 3077 r657 +87 多开|:51 3077 g321 +158 空开|:55 3077 g341 -64 多平|:55 3077 g498 -65 多平`;
document.getElementById('ticks').innerHTML = ticks.split('|').map(row => {
  const [time, p, lot, oi, type] = row.split(' ');
  return `<tr><td${time[0] === ':' ? ' class="sec"' : ''}>${time}</td><td class="g">${p}</td><td class="${lot[0]}">${lot.slice(1)}</td><td class="y">${oi}</td><td class="${lot[0]}">${type}</td></tr>`;
}).join('');
```
